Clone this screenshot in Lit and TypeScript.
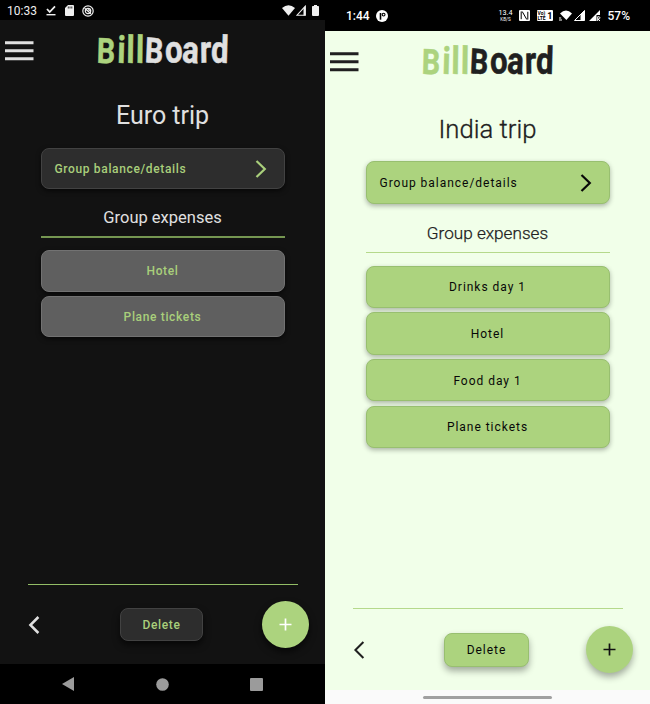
import { LitElement, html, css } from "lit";
import { customElement, property } from "lit/decorators.js";

@customElement("bill-logo")
class BillLogo extends LitElement {
  static styles = css`
    :host { display: block; width: 136px; height: 34px; }
    svg { display: block; overflow: visible; }
    text { font: 700 38px Roboto, sans-serif; stroke-width: 0.5; }
    .cap { font-size: 35px; }
    .bill { fill: #acd37e; stroke: #acd37e; }
    .board { fill: var(--ink); stroke: var(--ink); }
  `;
  render() {
    return html`<svg width="136" height="34" viewBox="0 0 136 34">
      <g transform="translate(1 .3) scale(.82 1)">
        <text class="bill" y="28.5" x="-.5 24.3 35.6 47.4" rotate="2 2 1 1"><tspan class="cap">B</tspan>ill</text>
        <text class="board" y="28 28.8 28 28.5 28" x="58 83.5 103.5 125.5 138.8" rotate="3 -3 3 -1 2"><tspan class="cap">B</tspan>oard</text>
      </g>
    </svg>`;
  }
}

@customElement("status-bar")
class StatusBar extends LitElement {
  @property() kind = "dark";
  static styles = css`
    :host { display: block; background: #000; color: #fff; font-family: Roboto, sans-serif; }
    .row { display: flex; align-items: center; height: 20px; font-size: 12px; box-sizing: border-box; padding: 1px 6px 0 7px; color: #eee; }
    .row.light { height: 31px; padding: 0 20px 0 21px; font-size: 12px; font-weight: 500; color: #fff; }
    .grow { flex: 1; }
    svg { display: block; fill: currentColor; flex: none; }
    .rate { display: flex; flex-direction: column; align-items: center; font-size: 7.2px; line-height: 9px; font-weight: 400; }
    .unit { font-size: 4.6px; line-height: 6px; }
    .volte { display: flex; align-items: center; box-sizing: border-box; width: 16px; height: 11px; border-radius: 1px; background: #fff; color: #000; padding-left: 1px; font-size: 9px; font-weight: 700; }
    .stack { display: flex; flex-direction: column; width: 10px; font-size: 5px; line-height: 5px; }
    .clock { width: 39px; }
    .clock.light { width: 30px; }
    .check { margin-right: 9px; }
    .sd { margin-right: 8px; }
    .wifi { margin-right: 1px; }
    .cell { margin-right: 6px; }
    .g7 { margin-right: 7px; }
    .g6 { margin-right: 6px; }
    .g2 { margin-right: 2px; }
    .g4 { margin-right: 4px; }
  `;
  render() {
    if (this.kind === "dark")
      return html`<div class="row">
        <span class="clock">10:33</span>
        <svg class="check" width="10" height="11" viewBox="0 0 10 11"><path d="M1 4l2.7 3L9 1.4" fill="none" stroke="currentColor" stroke-width="1.8"/><path d="M.5 9h9v1.4h-9z"/></svg>
        <svg class="sd" width="9" height="11" viewBox="0 0 9 11"><path d="M3 0h5q1 0 1 1v9q0 1-1 1H1q-1 0-1-1V3z"/><path d="M3.3 1.5v2M5 1.5v2M6.8 1.5v2" stroke="#000" stroke-width=".8"/></svg>
        <svg width="12" height="12" viewBox="0 0 12 12"><g fill="none" stroke="currentColor" stroke-width="1.2"><circle cx="6" cy="6" r="5.2"/><circle cx="6" cy="6" r="2.7"/><path d="M2.6 3.2L9 8.8M6 4.5l3 1.5"/></g></svg>
        <span class="grow"></span>
        <svg class="wifi" width="13" height="11" viewBox="0 0 13 11"><path d="M0 3Q6.5-2.4 13 3L6.5 10.8z"/></svg>
        <svg class="cell" width="10" height="11" viewBox="0 0 10 11"><path d="M9.3 1.2v9H1z" fill="none" stroke="currentColor" stroke-width="1.1"/><path d="M7.5 3l2-2v9.5h-2z"/></svg>
        <svg width="7" height="11" viewBox="0 0 7 11"><path d="M2 0h3v1h1.2q.8 0 .8.8V10q0 1-1 1H1q-1 0-1-1V1.8Q0 1 .8 1H2z"/></svg>
      </div>`;
    return html`<div class="row light">
      <span class="clock light">1:44</span>
      <svg width="12" height="12" viewBox="0 0 12 12"><circle cx="6" cy="6" r="6"/><path d="M4.5 3v6.7" fill="none" stroke="#000" stroke-width="1.6"/><circle cx="7.6" cy="4.6" r="1.4" fill="none" stroke="#000" stroke-width="1.1"/></svg>
      <span class="grow"></span>
      <span class="rate g6"><span>13.4</span><span class="unit">KB/S</span></span>
      <svg class="g7" width="11" height="11" viewBox="0 0 11 11"><rect width="11" height="11" rx="1"/><path d="M2.2 1.5v7.7M8.8 9.5V1.8M3.2 1.5L7.8 9.5" fill="none" stroke="#000" stroke-width="1"/></svg>
      <span class="volte g6"><span class="stack"><span>Vo)</span><span>LTE</span></span>1</span>
      <svg class="g2" width="13" height="11" viewBox="0 0 13 11"><path d="M1 3.4Q7-2.2 13 3.4L7.4 10z"/><path d="M0 8h2.2M0 10h3" stroke="currentColor" stroke-width="1.2"/></svg>
      <svg class="g4" width="11" height="11" viewBox="0 0 11 11"><path d="M.5 10.5L10.5.5v10z" fill="none" stroke="currentColor"/><path d="M6.5 4.5l4-4v10h-4z"/></svg>
      <svg class="g7" width="12" height="11" viewBox="0 0 12 11"><path d="M0 11L11 0v5H7.5v6z"/><path d="M8.7 11V6.7h1.2q1 0 1 1.1T9.9 9H9l2 2" fill="none" stroke="currentColor"/></svg>
      <span>57%</span>
    </div>`;
  }
}

@customElement("trip-screen")
class TripScreen extends LitElement {
  @property() theme = "dark";
  @property() heading = "";
  @property({ attribute: false }) items: string[] = [];

  static styles = css`
    :host { display: block; width: 325px; height: 704px; font-family: Roboto, sans-serif; }
    .screen { display: flex; flex-direction: column; height: 704px; }
    .dark {
      --bg: #121212; --ink: #e0e0e0; --card: #2d2d2d; --item: #5f5f5f; --edge: #424242; --item-edge: #727272;
      --label: #a9cf7b; --line: #93bd66; --plus: #fff; --weight: 500; --track: 0.65px;
      --shadow: 0 2px 5px #0009; --lift: 0 4px 7px #0009;
    }
    .light {
      --bg: #f1ffe9; --ink: #202020; --card: #acd37e; --item: #acd37e; --edge: #98bf70; --item-edge: #98bf70;
      --label: #080808; --line: #b5d98b; --plus: #111; --weight: 400; --track: 0.97px;
      --shadow: 0 2px 5px #0000004d; --lift: 0 4px 7px #00000055;
    }
    .app { flex: 1; min-height: 0; display: flex; flex-direction: column; background: var(--bg); color: var(--ink); }
    .header { display: grid; grid-template-columns: 91.5px 136px; padding: 14px 0 0 4.5px; height: 34px; }
    .burger { margin-top: 7px; display: block; fill: var(--ink); }
    .title { margin: 32px 0 0; height: 32px; line-height: 32px; font-size: 25px; font-weight: 400; text-align: center; }
    .light .title { margin-top: 34px; font-size: 25.7px; font-weight: 300; -webkit-text-stroke: 0.3px var(--ink); }
    .content { display: flex; flex-direction: column; padding: 16px 40.5px 0; }
    .button { box-sizing: border-box; display: flex; align-items: center; justify-content: center; height: 41.5px; border: 1px solid var(--item-edge); border-radius: 8px; background: var(--item); color: var(--label); font-size: 12px; font-weight: var(--weight); letter-spacing: var(--track); box-shadow: var(--shadow); }
    .light .content .button { height: 42.5px; padding-top: 1px; }
    .button.details { justify-content: space-between; padding: 0 17px 0 13px; background: var(--card); border-color: var(--edge); }
    .dark .details { height: 41px; }
    .section { margin: 16px 0 7px; height: 24px; line-height: 25px; font-size: 16.5px; font-weight: 400; text-align: center; }
    .dark .section { margin-bottom: 6.9px; }
    .light .section { margin: 17px 0 7px; line-height: 24px; font-size: 17.15px; font-weight: 300; -webkit-text-stroke: 0.25px var(--ink); }
    .rule { flex: none; height: 2px; background: #759651; }
    .light .rule { height: 1px; background: var(--line); }
    .list { display: flex; flex-direction: column; gap: 4.2px; padding-top: 12.4px; }
    .light .list { padding-top: 13px; }
    .fill { flex: 1; }
    .footer-rule { height: 1px; margin: 0 27px 0 28px; background: var(--line); }
    .footer { box-sizing: border-box; height: 79px; display: flex; justify-content: space-between; align-items: flex-start; padding: 16px 16px 0 28px; }
    .light .footer { height: 81px; padding: 17px 17px 0 28px; }
    .back { margin-top: 14.5px; width: 12px; }
    .back svg { display: block; }
    .button.delete { width: 83px; height: 33px; margin: 7px 0 0 21px; background: var(--card); border-color: var(--edge); box-shadow: var(--lift); }
    .light .button.delete { width: 85px; height: 34px; margin-left: 22px; }
    .fab { width: 47px; height: 47px; border-radius: 50%; background: #acd37e; box-shadow: var(--lift); display: grid; place-items: center; color: var(--plus); }
    .stroke { fill: none; stroke: currentColor; stroke-width: 2; }
    .dark .back .stroke { stroke-width: 2.5; }
    .details .stroke { stroke-width: 2.2; }
    .fab .stroke { stroke-width: 1.7; }
    .nav { height: 40px; background: #000; display: flex; align-items: center; justify-content: space-between; padding: 0 62px; fill: #9b9b9b; }
    .home { height: 14px; background: #fafafa; display: flex; justify-content: center; align-items: center; }
    .pill { width: 129px; height: 3px; border-radius: 2px; background: #a0a0a0; }
  `;

  render() {
    const dark = this.theme === "dark";
    return html`<div class="screen ${this.theme}">
      <status-bar kind=${this.theme}></status-bar>
      <div class="app">
        <div class="header">
          <svg class="burger" width="29" height="20" viewBox="0 0 29 20"><path d="M0 .2h28.5v3H0zM0 8.3h28.5v3H0zM0 16.3h28.5v3H0z"/></svg>
          <bill-logo></bill-logo>
        </div>
        <h1 class="title">${this.heading}</h1>
        <div class="content">
          <div class="button details">
            <span>Group balance/details</span>
            <svg width="12" height="18" viewBox="0 0 12 18"><path class="stroke" d="M1.5 1L9.8 9l-8.3 8"/></svg>
          </div>
          <h2 class="section">Group expenses</h2>
          <div class="rule"></div>
          <div class="list">${this.items.map((i) => html`<div class="button">${i}</div>`)}</div>
        </div>
        <div class="fill"></div>
        <div class="footer-rule"></div>
        <div class="footer">
          <div class="back"><svg width="12" height="18" viewBox="0 0 12 18"><path class="stroke" d="M10.4 1L2.4 9l8 8"/></svg></div>
          <div class="button delete">Delete</div>
          <div class="fab"><svg width="13" height="13" viewBox="0 0 13 13"><path class="stroke" d="M6.5.5v12M.5 6.5h12"/></svg></div>
        </div>
      </div>
      ${dark
        ? html`<div class="nav">
            <svg width="12" height="14" viewBox="0 0 12 14"><path d="M12 0v14L0 7z"/></svg>
            <svg width="13" height="13" viewBox="0 0 13 13"><circle cx="6.5" cy="6.5" r="6.3"/></svg>
            <svg width="13" height="13" viewBox="0 0 13 13"><rect width="13" height="13" rx="1"/></svg>
          </div>`
        : html`<div class="home"><div class="pill"></div></div>`}
    </div>`;
  }
}

@customElement("app-root")
class AppRoot extends LitElement {
  static styles = css`
    :host { display: flex; width: 650px; height: 704px; overflow: hidden; }
  `;
  render() {
    return html`
      <trip-screen theme="dark" heading="Euro trip" .items=${["Hotel", "Plane tickets"]}></trip-screen>
      <trip-screen theme="light" heading="India trip" .items=${["Drinks day 1", "Hotel", "Food day 1", "Plane tickets"]}></trip-screen>
    `;
  }
}
